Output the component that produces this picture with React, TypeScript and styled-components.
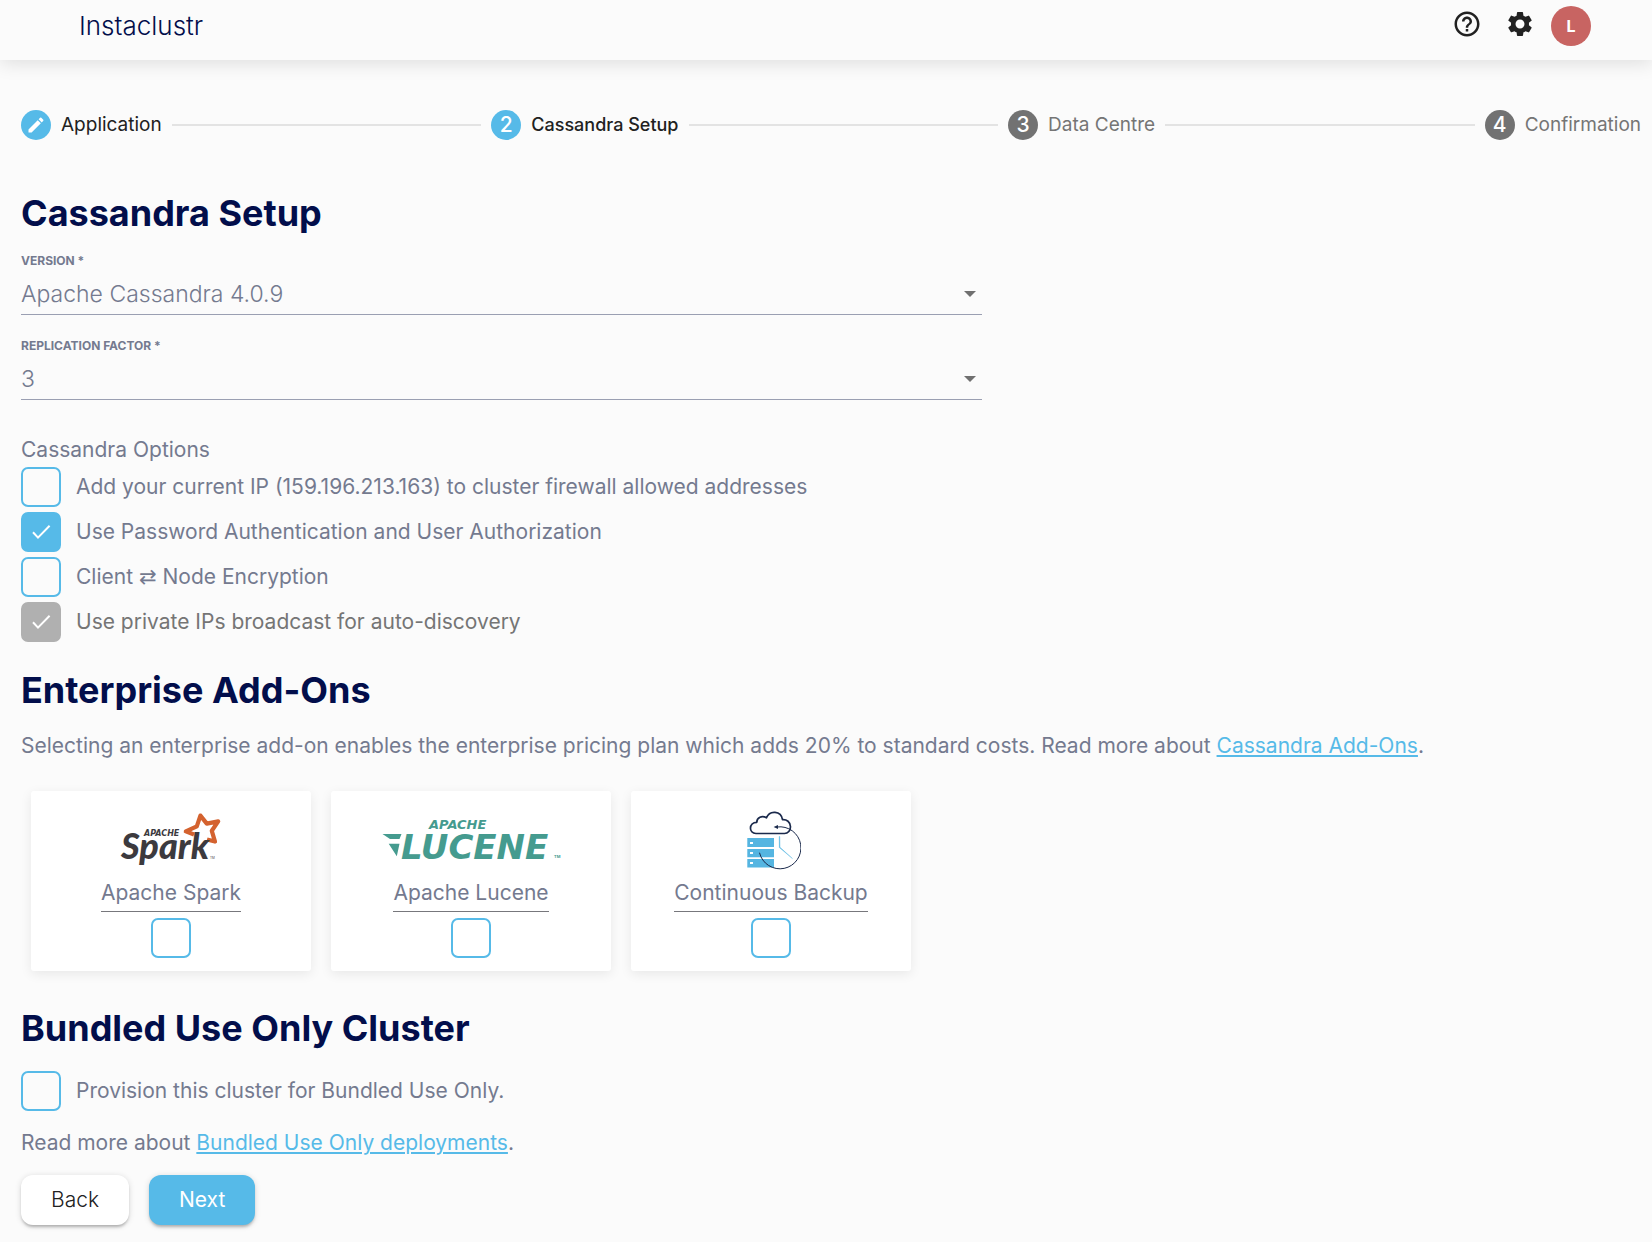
import React, { useState } from "react";
import styled, { createGlobalStyle, css } from "styled-components";
import { MdEdit, MdHelpOutline, MdSettings } from "react-icons/md";

const color = {
  page: "#fbfbfb",
  navy: "#020e4b",
  slate: "#747a8f",
  grey: "#757575",
  ink: "#212121",
  blue: "#56bae8",
  rule: "#9a9fb2",
};

const GlobalStyle = createGlobalStyle`
  *, *::before, *::after { box-sizing: border-box; }
  body {
    margin: 0;
    background: ${color.page};
    color: ${color.slate};
    font-family: Inter, "Liberation Sans", sans-serif;
    font-size: 21px;
    line-height: 30px;
  }
  button, select, input { font: inherit; }
`;

const Header = styled.header`
  display: flex;
  align-items: center;
  justify-content: space-between;
  height: 60px;
  padding: 0 61px 9px 79px;
  background: ${color.page};
  box-shadow: 0 3px 18px rgba(0, 0, 0, 0.12);
`;

const Brand = styled.a`
  color: ${color.navy};
  font-size: 26px;
  font-weight: 300;
  text-decoration: none;
`;

const HeaderActions = styled.nav`
  display: flex;
  align-items: flex-start;
`;

const IconButton = styled.button`
  display: grid;
  place-items: center;
  width: 53px;
  height: 36px;
  padding: 0;
  border: 0;
  background: none;
  color: ${color.ink};
  cursor: pointer;
`;

const Avatar = styled.button`
  width: 40px;
  height: 40px;
  margin-left: 5px;
  padding: 0;
  border: 0;
  border-radius: 50%;
  background: #c86462;
  color: #fff;
  font-size: 16px;
  font-weight: 700;
  cursor: pointer;
`;

const Main = styled.main`
  padding: 50px 11px 16px 21px;
`;

const Stepper = styled.ol`
  display: flex;
  align-items: center;
  gap: 10px;
  margin: 0 0 49px;
  padding: 0;
  list-style: none;
`;

type StepState = "done" | "active" | "todo";

const Step = styled.li<{ $state: StepState }>`
  display: flex;
  align-items: center;
  gap: 10px;
  color: ${(p) => (p.$state === "todo" ? color.grey : color.ink)};
  font-size: ${(p) => (p.$state === "active" ? 18 : 19)}px;
  font-weight: ${(p) => (p.$state === "active" ? 500 : 400)};
  white-space: nowrap;
`;

const StepBadge = styled.span<{ $state: StepState }>`
  display: grid;
  place-items: center;
  width: 30px;
  height: 30px;
  border-radius: 50%;
  background: ${(p) => (p.$state === "todo" ? "#727272" : color.blue)};
  color: #fff;
  font-size: 21px;
  font-weight: 500;
`;

const StepLine = styled.li`
  flex: 1;
  height: 2px;
  background: #e3e3e3;
`;

const Heading = styled.h2`
  margin: 0;
  color: ${color.navy};
  font-size: 36px;
  font-weight: 700;
  line-height: 48px;
`;

const Section = styled.section`
  margin-top: 24px;
`;

const Fields = styled.div`
  display: grid;
  gap: 23px;
  width: 60%;
  max-width: 961px;
  margin: 16px 0 38px;
`;

const Field = styled.div`
  display: grid;
`;

const FieldLabel = styled.label`
  font-size: 12px;
  font-weight: 700;
  line-height: 16px;
  text-transform: uppercase;
`;

const SelectBox = styled.div`
  display: grid;
  align-items: center;
  height: 46px;
  border-bottom: 1px solid ${color.rule};

  > * { grid-area: 1 / 1; }
`;

const Select = styled.select`
  width: 100%;
  height: 100%;
  padding: 5px 24px 0 0;
  border: 0;
  appearance: none;
  background: none;
  color: ${color.slate};
  font-size: 23px;
  font-weight: 300;
  cursor: pointer;
`;

const SelectArrow = styled.svg`
  justify-self: end;
  margin: 4px 6px 0 0;
  pointer-events: none;
`;

const OptionGroup = styled.fieldset`
  display: grid;
  gap: 5px;
  margin: 0;
  padding: 0;
  border: 0;
`;

const GroupTitle = styled.legend`
  margin-bottom: 5px;
  padding: 0;
  line-height: 24px;
`;

const OptionRow = styled.label<{ $disabled?: boolean }>`
  display: flex;
  align-items: center;
  gap: 15px;
  ${(p) => p.$disabled && css`color: ${color.grey};`}
`;

const Arrows = styled.span`
  font-family: "DejaVu Sans", sans-serif;
`;

const CheckBoxFrame = styled.span`
  display: grid;
  flex: none;
  width: 40px;
  height: 40px;

  > * { grid-area: 1 / 1; }
`;

const CheckInput = styled.input`
  width: 40px;
  height: 40px;
  margin: 0;
  border: 2px solid ${color.blue};
  border-radius: 7px;
  appearance: none;
  cursor: pointer;

  &:checked { background: ${color.blue}; }
  &:disabled { border-color: #b0b0b0; background: #b0b0b0; cursor: default; }
`;

const Tick = styled.svg`
  pointer-events: none;
`;

const Paragraph = styled.p`
  margin: 17px 0;
`;

const Link = styled.a`
  color: ${color.blue};
  text-decoration: underline;
  text-decoration-thickness: 2px;
  text-underline-offset: 2px;
`;

const Cards = styled.div`
  display: flex;
  flex-wrap: wrap;
  gap: 20px;
  margin: 30px 0 33px;
  padding-left: 10px;
`;

const Card = styled.label`
  display: flex;
  flex-direction: column;
  align-items: center;
  width: 280px;
  padding: 20px 16px 13px;
  border-radius: 3px;
  background: #fff;
  box-shadow: 0 3px 12px rgba(0, 0, 0, 0.08);
  cursor: pointer;
`;

const CardName = styled.span`
  margin: 4px 0 6px;
  border-bottom: 1px solid #77777c;
  line-height: 36px;
`;

const Provision = styled.div`
  margin-top: 19px;
`;

const Actions = styled.div`
  display: flex;
  gap: 20px;
`;

const Button = styled.button<{ $primary?: boolean }>`
  height: 50px;
  padding: 0 30px;
  border: 0;
  border-radius: 12px;
  background: ${(p) => (p.$primary ? color.blue : "#fff")};
  color: ${(p) => (p.$primary ? "#fff" : color.ink)};
  font-weight: ${(p) => (p.$primary ? 400 : 300)};
  box-shadow: 0 3px 3px -1px rgba(0, 0, 0, 0.24), 0 1px 6px rgba(0, 0, 0, 0.14);
  cursor: pointer;
`;

function CheckBox({ initial = false, disabled = false }: { initial?: boolean; disabled?: boolean }) {
  const [checked, setChecked] = useState(initial);
  return (
    <CheckBoxFrame>
      <CheckInput
        type="checkbox"
        checked={checked}
        disabled={disabled}
        onChange={(e) => setChecked(e.target.checked)}
      />
      {checked && (
        <Tick width="40" height="40" viewBox="0 0 40 40" fill="none" stroke="#fff" strokeWidth="2" aria-hidden="true">
          <path d="M12 20.2 L17 25.6 L28.6 13.8" />
        </Tick>
      )}
    </CheckBoxFrame>
  );
}

function Option({
  initial,
  disabled,
  children,
}: {
  initial?: boolean;
  disabled?: boolean;
  children: React.ReactNode;
}) {
  return (
    <OptionRow $disabled={disabled}>
      <CheckBox initial={initial} disabled={disabled} />
      <span>{children}</span>
    </OptionRow>
  );
}

function SelectField({ id, label, options }: { id: string; label: string; options: string[] }) {
  return (
    <Field>
      <FieldLabel htmlFor={id}>{label} *</FieldLabel>
      <SelectBox>
        <Select id={id}>
          {options.map((o) => (
            <option key={o}>{o}</option>
          ))}
        </Select>
        <SelectArrow width="12" height="6" viewBox="0 0 12 6" aria-hidden="true">
          <path d="M0 0H12L6 6Z" fill="#707070" />
        </SelectArrow>
      </SelectBox>
    </Field>
  );
}

function SparkLogo() {
  return (
    <svg width="110" height="60" viewBox="0 0 110 60" aria-hidden="true">
      <path
        d="M78 23.5 L69.8 20.4 L80.8 15.3 L84.4 4.6 L90.8 12.6 L102.2 10.4 L95.8 19.8 L99 30.6 L91 28.4"
        fill="none"
        stroke="#d4622f"
        strokeWidth="4.2"
        strokeLinejoin="round"
      />
      <text x="28" y="25" fontFamily="DejaVu Sans" fontSize="8" fontWeight="700" fontStyle="italic" fill="#3c3a3e">APACHE</text>
      <text x="5" y="48" fontFamily="Lato" fontSize="36" fontWeight="900" fontStyle="italic" fill="#3c3a3e">Spark</text>
      <text x="94" y="48" fontFamily="Inter" fontSize="3" fill="#3c3a3e">TM</text>
    </svg>
  );
}

function LuceneLogo() {
  return (
    <svg width="180" height="60" viewBox="0 0 180 60" fill="#459b8f" aria-hidden="true">
      <path d="M1.5 23 H20.5 L18.5 28 H9Z M7.7 32.7 H18.5 L15.8 45.3Z" />
      <text x="48" y="18" fontFamily="DejaVu Sans" fontSize="13" fontWeight="700" fontStyle="italic">APACHE</text>
      <text x="20" y="48" fontFamily="DejaVu Sans" fontSize="34" fontWeight="700" fontStyle="italic">LUCENE</text>
      <text x="173" y="47" fontFamily="Inter" fontSize="4" fontWeight="700">TM</text>
    </svg>
  );
}

function BackupLogo() {
  return (
    <svg width="60" height="60" viewBox="0 0 60 60" aria-hidden="true">
      <path d="M6.3 27H33V36H6.3Z M6.3 38H33V46.2H6.3Z M6.3 48H33V56.4H6.3Z" fill="#55b5e1" />
      <path d="M9 31H12V33H9Z M9 41H12V43H9Z M9 51H12V53H9Z" fill="#fff" />
      <path
        d="M15 22.5 C7.5 22.5 7.5 11.5 15.8 11.3 C15.7 6.5 21 4 25.5 6.8 C28.5 -1 40 -0.5 41.5 8.6 C45.5 8.2 49.5 11 49.5 15.8 C49.5 19.5 47 22.5 43.5 22.5Z"
        fill="#fff"
        stroke="#1b2a4c"
        strokeWidth="1.7"
        strokeLinejoin="round"
      />
      <path d="M18.5 41.7 A21 21 0 1 0 36 16" fill="none" stroke="#1b2a4c" strokeWidth="1" />
      <path d="M32.6 16 L37 14 V18Z" fill="#1b2a4c" />
      <path d="M38.2 25.5 L38.3 36.6 L51.5 47.6 L39 36.3 L38.8 25.5Z" fill="#55b5e1" stroke="#55b5e1" strokeWidth="0.4" />
    </svg>
  );
}

const steps: { name: string; state: StepState }[] = [
  { name: "Application", state: "done" },
  { name: "Cassandra Setup", state: "active" },
  { name: "Data Centre", state: "todo" },
  { name: "Confirmation", state: "todo" },
];

const addOns = [
  { name: "Apache Spark", logo: <SparkLogo /> },
  { name: "Apache Lucene", logo: <LuceneLogo /> },
  { name: "Continuous Backup", logo: <BackupLogo /> },
];

export default function App() {
  return (
    <>
      <GlobalStyle />
      <Header>
        <Brand href="#">Instaclustr</Brand>
        <HeaderActions>
          <IconButton type="button" aria-label="Help"><MdHelpOutline size={30} /></IconButton>
          <IconButton type="button" aria-label="Settings"><MdSettings size={30} /></IconButton>
          <Avatar type="button">L</Avatar>
        </HeaderActions>
      </Header>
      <Main>
        <Stepper>
          {steps.map((s, i) => (
            <React.Fragment key={s.name}>
              {i > 0 && <StepLine aria-hidden="true" />}
              <Step $state={s.state}>
                <StepBadge $state={s.state}>{s.state === "done" ? <MdEdit size={20} /> : i + 1}</StepBadge>
                {s.name}
              </Step>
            </React.Fragment>
          ))}
        </Stepper>

        <Heading>Cassandra Setup</Heading>
        <Fields>
          <SelectField id="version" label="Version" options={["Apache Cassandra 4.0.9"]} />
          <SelectField id="replication" label="Replication Factor" options={["3", "5"]} />
        </Fields>
        <OptionGroup>
          <GroupTitle>Cassandra Options</GroupTitle>
          <Option>Add your current IP (159.196.213.163) to cluster firewall allowed addresses</Option>
          <Option initial>Use Password Authentication and User Authorization</Option>
          <Option>Client <Arrows>⇄</Arrows> Node Encryption</Option>
          <Option initial disabled>Use private IPs broadcast for auto-discovery</Option>
        </OptionGroup>

        <Section>
          <Heading>Enterprise Add-Ons</Heading>
          <Paragraph>
            Selecting an enterprise add-on enables the enterprise pricing plan which adds 20% to standard costs. Read more
            about <Link href="#">Cassandra Add-Ons</Link>.
          </Paragraph>
          <Cards>
            {addOns.map((a) => (
              <Card key={a.name}>
                {a.logo}
                <CardName>{a.name}</CardName>
                <CheckBox />
              </Card>
            ))}
          </Cards>
        </Section>

        <Section>
          <Heading>Bundled Use Only Cluster</Heading>
          <Provision>
            <Option>Provision this cluster for Bundled Use Only.</Option>
          </Provision>
          <Paragraph>
            Read more about <Link href="#">Bundled Use Only deployments</Link>.
          </Paragraph>
          <Actions>
            <Button type="button">Back</Button>
            <Button type="button" $primary>Next</Button>
          </Actions>
        </Section>
      </Main>
    </>
  );
}
